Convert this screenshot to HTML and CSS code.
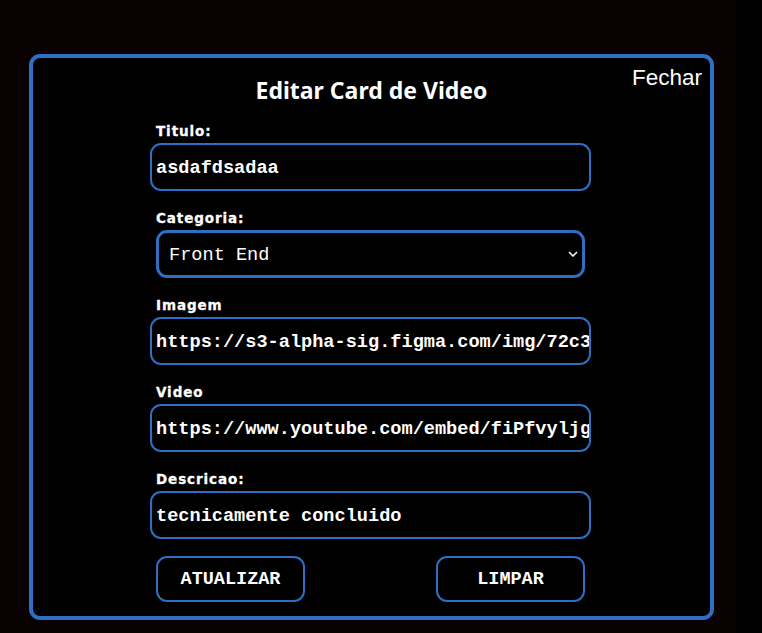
FILE: index.html
```html
<!DOCTYPE html>
<html lang="pt">
<head>
<meta charset="utf-8">
<title>Editar Card de Video</title>
<link rel="stylesheet" href="styles.css">
</head>
<body>
<div class="page">
  <div class="modal">
    <button class="close">Fechar</button>
    <h2 class="title">Editar Card de Video</h2>
    <form class="form">
      <div class="field">
        <label class="label">Titulo:</label>
        <input class="input" type="text" value="asdafdsadaa">
      </div>
      <div class="field">
        <label class="label">Categoria:</label>
        <div class="select-wrap">
          <select class="select"><option>Front End</option></select>
          <svg class="chev" width="10" height="6" viewBox="0 0 10 6"><path d="M1 1l4 4 4-4" fill="none" stroke="#fff" stroke-width="1.5"/></svg>
        </div>
      </div>
      <div class="field">
        <label class="label">Imagem</label>
        <input class="input" type="text" value="https://s3-alpha-sig.figma.com/img/72c3/0b4f/b6f6a7b2e1">
      </div>
      <div class="field">
        <label class="label">Video</label>
        <input class="input" type="text" value="https://www.youtube.com/embed/fiPfvyljgsM">
      </div>
      <div class="field">
        <label class="label">Descricao:</label>
        <input class="input" type="text" value="tecnicamente concluido">
      </div>
      <div class="buttons">
        <button class="btn" type="button">ATUALIZAR</button>
        <button class="btn" type="button">LIMPAR</button>
      </div>
    </form>
  </div>
</div>
</body>
</html>
```
FILE: styles.css
```css
html, body {
  margin: 0;
  padding: 0;
  background: #000;
  height: 100%;
}
.page {
  width: 736px;
  height: 633px;
  background: #0a0102;
  padding: 54px 0 0 29px;
  box-sizing: border-box;
}
.modal {
  position: relative;
  width: 685px;
  height: 566px;
  box-sizing: border-box;
  border: 4px solid #2e6fc4;
  border-radius: 11px;
  background: #000;
  display: flex;
  flex-direction: column;
  align-items: center;
}
.close {
  position: absolute;
  top: 8px;
  right: 8px;
  background: none;
  border: none;
  padding: 0;
  color: #fff;
  font-family: "Liberation Sans", Arial, sans-serif;
  font-size: 22.5px;
  line-height: 24px;
}
.title {
  margin: 17px 0 0;
  font-family: "Noto Sans", "Open Sans", sans-serif;
  font-weight: 700;
  font-size: 23px;
  line-height: 30px;
  color: #fff;
}
.form {
  margin: 18px 0 0 -2px;
  width: 441px;
  display: flex;
  flex-direction: column;
  gap: 19px;
}
.field {
  display: flex;
  flex-direction: column;
}
.label {
  font-family: "DejaVu Sans", Inter, sans-serif;
  font-weight: 700;
  font-size: 13.5px;
  line-height: 16px;
  letter-spacing: 0.9px;
  color: #fff;
  padding-left: 6px;
  margin-bottom: 4px;
  -webkit-text-stroke: 0.3px #fff;
}
.input {
  height: 48px;
  box-sizing: border-box;
  border: 2.5px solid #2e6fc4;
  border-radius: 11px;
  background: #000;
  color: #fff;
  font-family: "Liberation Mono", "Courier New", monospace;
  font-weight: 700;
  font-size: 18.6px;
  padding: 2px 0 0 4px;
  outline: none;
}
.select-wrap {
  position: relative;
  margin: 0 6px;
}
.select {
  width: 100%;
  height: 48px;
  box-sizing: border-box;
  border: 3.5px solid #2e6fc4;
  border-radius: 11px;
  background: #000;
  color: #fff;
  font-family: "Liberation Mono", "Courier New", monospace;
  font-size: 18.6px;
  padding: 2px 0 0 10px;
  appearance: none;
  -webkit-appearance: none;
  outline: none;
}
.chev {
  position: absolute;
  right: 7px;
  top: 21px;
}
.buttons {
  display: flex;
  justify-content: space-between;
  margin: -2px 6px 0;
}
.btn {
  width: 149px;
  height: 46px;
  box-sizing: border-box;
  border: 2.5px solid #2e6fc4;
  border-radius: 11px;
  background: #000;
  color: #fff;
  font-family: "Liberation Mono", "Courier New", monospace;
  font-weight: 700;
  font-size: 18.5px;
  padding: 0;
}
```
